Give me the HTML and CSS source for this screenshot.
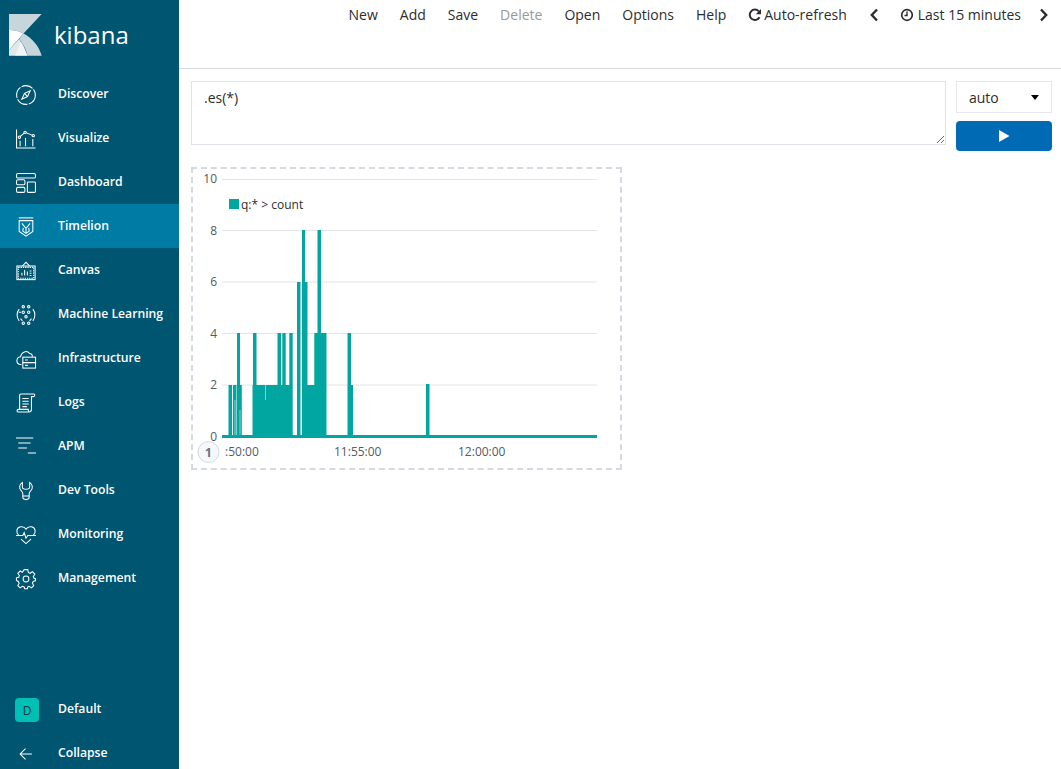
FILE: index.html
```html
<!DOCTYPE html>
<html lang="en">
<head>
<meta charset="utf-8">
<title>Timelion - Kibana</title>
<link rel="stylesheet" href="styles.css">
</head>
<body>
<div class="app">
  <nav class="side">
    <div class="brand">
      <svg class="logo" viewBox="9 14 33 42" width="33" height="42">
        <path fill="#c7d6db" d="M9 14H41.7L23.5 33.5C19 31 14 30 9 30Z"/>
        <path fill="#fff" d="M9 30C14 30 19 31 23.5 33.5L9 50Z"/>
        <path fill="#c7d6db" d="M23.5 33.5C32 38 39 46 41.7 55.7H27.5C26 48 21 41 19 39Z"/>
        <path fill="#dfe8eb" d="M19 39C22 43 25 49 27.5 55.7H9V50Z"/>
        <path fill="#fff" d="M21 41.5C23.5 45 25.5 50 27.5 55.7H15Z" opacity=".55"/>
      </svg>
      <span class="brand-name">kibana</span>
    </div>
    <ul class="nav">
      <li class="nav-item"><svg class="ico" viewBox="0 0 22 22"><circle cx="11" cy="11" r="10.300" stroke-dasharray="13 1.4"/><path d="M15.600 6.400 12.700 12.700 6.400 15.600 9.300 9.300Z"/><path d="M9.300 9.300 12.700 12.700"/></svg><span>Discover</span></li>
      <li class="nav-item"><svg class="ico" viewBox="0 0 22 22"><path d="M.6 .5V21H21.500"/><path d="M3.700 9 10 3.700 19 7.300"/><circle class="dot" cx="3.700" cy="9" r="1.300"/><circle class="dot" cx="10" cy="3.700" r="1.300"/><circle class="dot" cx="19" cy="7.300" r="1.300"/><path d="M4.500 13V19M10.500 10V19M18.500 11V19"/></svg><span>Visualize</span></li>
      <li class="nav-item"><svg class="ico" viewBox="0 0 22 22"><rect x=".6" y=".6" width="20.800" height="5" rx="1.500"/><rect x=".6" y="7.500" width="9.200" height="5.500" rx="1.500"/><rect x=".6" y="15.800" width="9.200" height="5.500" rx="1.500"/><rect x="12.500" y="9.800" width="8.900" height="11.500" rx="1"/></svg><span>Dashboard</span></li>
      <li class="nav-item active"><svg class="ico" viewBox="0 0 22 22"><path d="M3 1H19"/><path d="M3.500 4H18.500V16L11 21 3.500 16Z"/><path d="M6.500 7 11 12.500 15.500 7M11 12.500V17M8 12 7.500 15.500 11 18 14.500 15.500 14 12"/></svg><span>Timelion</span></li>
      <li class="nav-item"><svg class="ico" viewBox="0 0 22 22"><rect x="1" y="5.500" width="20" height="15"/><path d="M2.500 7H19.500V19H2.500Z" stroke-dasharray="1.500 1"/><path d="M7 5.500 11 1.500 15 5.500"/><path d="M6.500 16V13M9.500 16V10M12.500 16V11.500M15 11H17M15 13.500H17M15 16H17"/></svg><span>Canvas</span></li>
      <li class="nav-item"><svg class="ico" viewBox="0 0 22 22"><circle cx="8" cy="2" r="1.300"/><circle cx="14" cy="2" r="1.300"/><circle cx="8" cy="8" r="1.300"/><circle cx="14" cy="8" r="1.300"/><circle cx="11" cy="13" r="1.300"/><circle cx="8" cy="20" r="1.300"/><circle cx="14" cy="20" r="1.300"/><path d="M3.500 4.500C.5 8 .5 14 3.500 17.500M18.500 4.500C21.500 8 21.500 14 18.500 17.500M5.500 8H3M5 15 7 17.500M17 15 15 17.500"/></svg><span>Machine Learning</span></li>
      <li class="nav-item"><svg class="ico" viewBox="0 0 22 22"><path d="M6 17H4.500C-.5 16 0 9 5 8.500 6 3 12 1 15 5 16.500 5 18 6.500 18 8.500"/><rect x="7.500" y="9" width="14" height="6"/><rect x="7.500" y="15" width="14" height="6"/><path d="M10 12H13M10 18H13"/></svg><span>Infrastructure</span></li>
      <li class="nav-item"><svg class="ico" viewBox="0 0 22 22"><path d="M4 18V2.500C4 1.500 4.500 1 5.500 1H19.500C21 1 21 4 19 4H17V18C17 20.500 15 21 14 21H3C.5 21 .5 18 3 18H13.500C13.500 19.500 13.700 20.500 14 21"/><path d="M7 6H14M7 9H14M7 12H14M7 15H12"/></svg><span>Logs</span></li>
      <li class="nav-item"><svg class="ico" viewBox="0 0 22 22"><path d="M0 1H19M2.500 6.500H16M2.500 12H12M13 17.500H22"/></svg><span>APM</span></li>
      <li class="nav-item"><svg class="ico" viewBox="0 0 22 22"><path d="M7 1.500C3.500 3.500 3 8.500 6 11 7 12 7.500 13 7.500 14V18C7.500 20 8.500 20.500 11 20.500S14.500 20 14.500 18V14C14.500 13 15 12 16 11 19 8.500 18.500 3.500 15 1.500V6.500C15 8 13.500 9 11 9S7 8 7 6.500Z"/><path d="M7.500 16.500H14.500"/></svg><span>Dev Tools</span></li>
      <li class="nav-item"><svg class="ico" viewBox="0 0 22 22"><path d="M3 11.500C-.5 8 .5 3 5 2 8 1.500 10 3 11 4.500 12 3 14 1.500 17 2 21.500 3 22.500 8 19 11.500"/><path d="M0 11.500H7.500L9 8.500 11 14.500 13 11.500H22"/><path d="M5.500 15.500 11 20.500 16.500 15.500"/></svg><span>Monitoring</span></li>
      <li class="nav-item"><svg class="ico" viewBox="0 0 22 22"><path d="M9 1H13L13.500 4 15.500 5 18 3.300 20.700 6 19 8.500 19.800 10.500 21.500 11V13L19 14 18 16 19.500 18.500 17 21 14.500 19.300 13 20 12.500 22H9.500L9 20 7 19.300 4.500 21 2 18.500 3.500 16 2.500 14 .5 13V10L3 9.500 3.700 7.500 2 5 4.700 2.500 7 4Z" transform="translate(0 -.3)"/><circle cx="11" cy="11" r="3.200"/></svg><span>Management</span></li>
    </ul>
    <div class="side-foot">
      <div class="nav-item"><span class="space-badge">D</span><span>Default</span></div>
      <div class="nav-item"><svg class="ico" viewBox="0 0 22 22"><path d="M17.500 11H4.500M10.500 5 4.500 11 10.500 17"/></svg><span>Collapse</span></div>
    </div>
  </nav>
  <main class="main">
    <header class="top">
      <a class="tool">New</a>
      <a class="tool">Add</a>
      <a class="tool">Save</a>
      <a class="tool off">Delete</a>
      <a class="tool">Open</a>
      <a class="tool">Options</a>
      <a class="tool">Help</a>
      <a class="tool icon-tool"><svg class="mini" viewBox="0 0 14 14"><path d="M11.500 9.300A5.200 5.200 0 1 1 10.800 3.300" fill="none" stroke="#2d2d2d" stroke-width="2"/><path d="M13 1V6.200H7.800Z" fill="#2d2d2d"/></svg>Auto-refresh</a>
      <a class="tool chev chev-prev"><svg class="mini" viewBox="0 0 10 14"><path d="M8 1.500 2.800 7 8 12.500" fill="none" stroke="#2d2d2d" stroke-width="2.400"/></svg></a>
      <a class="tool icon-tool clock"><svg class="mini" viewBox="0 0 14 14"><circle cx="7" cy="7" r="5.300" fill="none" stroke="#2d2d2d" stroke-width="1.700"/><path d="M7 3.500V7.500H4.500" fill="none" stroke="#2d2d2d" stroke-width="1.400"/></svg>Last 15 minutes</a>
      <a class="tool chev chev-next"><svg class="mini" viewBox="0 0 10 14"><path d="M2 1.500 7.200 7 2 12.500" fill="none" stroke="#2d2d2d" stroke-width="2.400"/></svg></a>
    </header>
    <section class="query">
      <textarea class="expr" spellcheck="false">.es(*)</textarea>
      <div class="controls">
        <div class="interval"><span>auto</span><span class="caret"></span></div>
        <button class="run" type="button"><svg viewBox="0 0 12 12" width="12" height="12"><path d="M1 0 11.500 6 1 12Z" fill="#fff"/></svg></button>
      </div>
    </section>
    <section class="sheet">
      <div class="cell">
        <svg class="chart" viewBox="193 169 427 299" width="427" height="299">
          <g class="grid">
            <path d="M222 179.500H597M222 230.500H597M222 282H597M222 333.500H597M222 385H597"/>
          </g>
          <g class="ylab">
            <text x="217" y="183">10</text>
            <text x="217" y="234.500">8</text>
            <text x="217" y="286">6</text>
            <text x="217" y="337.500">4</text>
            <text x="217" y="389">2</text>
            <text x="217" y="440.500">0</text>
          </g>
          <rect class="swatch" x="229" y="199" width="10" height="10"/>
          <text class="lab" x="241" y="209">q:* &gt; count</text>
          <path class="area" d="M222 435H228.500V385H232V435H233V385H236.500V435H237V333H240V385H241.800V435H252.500V385H253V333H256.500V385H277.500V333H281V385H282.300V333H285.700V385H289.300V333H292.700V435H297V282H300.500V435H302V230H305V282H307.500V385H314.300V333H317.500V230H321V333H322.300V333H326.500V435H347.500V333H351V385H353V435H426V384H429.500V435H597V438H222Z"/>
          <path class="nick" d="M265.500 385V400M235 400V435M240 410V435"/>
          <g class="xlab">
            <text x="225" y="456">:50:00</text>
            <text x="334" y="456">11:55:00</text>
            <text x="458" y="456">12:00:00</text>
          </g>
          <circle class="pin" cx="208.500" cy="452" r="10.500"/>
          <text class="pin-num" x="208.500" y="456.500">1</text>
        </svg>
      </div>
    </section>
  </main>
</div>
</body>
</html>
```
FILE: styles.css
```css
* { box-sizing: border-box; }
html, body { margin: 0; height: 100%; overflow: hidden; background: #fff; }
body { font-family: "Open Sans", sans-serif; font-size: 14px; color: #2d2d2d; }
.app { display: flex; height: 769px; overflow: hidden; }

.side { flex: 0 0 179px; height: 775px; background: #005571; color: #fff; display: flex; flex-direction: column; }
.brand { height: 72px; padding: 14px 0 0 9px; display: flex; align-items: flex-start; }
.logo { display: block; flex: none; }
.brand-name { margin: 4px 0 0 12px; font-size: 24px; line-height: 34px; color: #fff; }
.nav { list-style: none; margin: 0; padding: 0; }
.nav-item { height: 44px; display: flex; align-items: center; padding: 0 0 2px 16px; font-size: 12.200px; font-weight: 600; color: #fff; white-space: nowrap; }
.nav-item.active { background: #007ba4; }
.ico { width: 20px; height: 20px; flex: none; margin: 4px 22px 0 0; fill: none; stroke: #fff; stroke-width: 1.150; overflow: visible; }
.ico .dot { fill: #005571; }
.side-foot { margin-top: auto; }
.space-badge { width: 24px; height: 24px; flex: none; margin: 4px 19px 0 -1px; border-radius: 4px; background: #00bfb3; color: #003b4a; font-size: 12px; font-weight: 400; display: flex; align-items: center; justify-content: center; }

.main { flex: 1; min-width: 0; display: flex; flex-direction: column; }
.top { height: 69px; flex: none; border-bottom: 1px solid #d9d9e3; display: flex; justify-content: flex-end; align-items: flex-start; padding: 5px 0 0 0; line-height: 20px; }
.tool { height: 20px; padding: 0 11px; color: #2d2d2d; white-space: nowrap; display: flex; align-items: center; }
.tool.off { color: #999; }
.mini { width: 14px; height: 14px; flex: none; margin-right: 2px; }
.clock .mini { margin-right: 4px; }
.chev .mini { width: 10px; margin: 0; }
.chev-prev { padding: 0 10px 0 11px; }
.chev-next { padding: 0 12px 0 7px; }

.query { display: flex; gap: 10px; padding: 12px 9px 0 12px; }
.expr { flex: 1; height: 64px; padding: 6px 12px; border: 1px solid #dfe2e6; border-radius: 0; background: #fff; font: 14px/20px "Open Sans", sans-serif; color: #2d2d2d; outline: none; resize: vertical; }
.controls { width: 96px; flex: none; display: flex; flex-direction: column; gap: 8px; }
.interval { height: 32px; border: 1px solid #e6e8ec; display: flex; align-items: center; justify-content: space-between; padding: 0 12px; }
.caret { width: 0; height: 0; border-left: 4.500px solid transparent; border-right: 4.500px solid transparent; border-top: 5px solid #000; }
.run { height: 30px; padding: 0; border: 0; border-radius: 4px; background: #006bb4; display: flex; align-items: center; justify-content: center; }

.sheet { padding: 16px 0 0 12px; }
.cell { width: 431px; height: 303px; border: 2px dashed #d5d9e0; }
.chart { display: block; font-family: "Open Sans", sans-serif; font-size: 12px; }
.grid path { fill: none; stroke: #e3e4e8; stroke-width: 1; }
.ylab text { text-anchor: end; fill: #545b64; }
.xlab text { fill: #545b64; }
.swatch { fill: #00a69f; }
.lab { fill: #2d2d2d; }
.area { fill: #00a69f; }
.nick { fill: none; stroke: #7fd2cd; stroke-width: 1; }
.pin { fill: #f5f7fa; stroke: #d3dae6; stroke-width: 1; }
.pin-num { text-anchor: middle; font-weight: 700; font-size: 12px; fill: #69707d; }
```
